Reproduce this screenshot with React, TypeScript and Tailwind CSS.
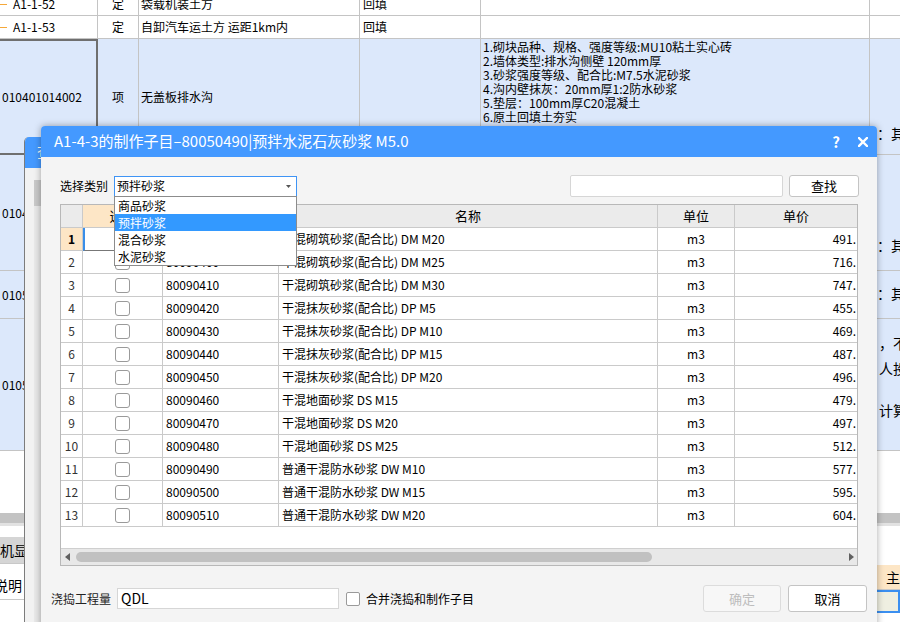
import React from "react";

const COLS = "grid grid-cols-[98px_41px_221px_121px_389px_30px]";
const bcell = "border-r border-b border-[#c4c4c4]";

function Background() {
  return (
    <div className="flex flex-col text-[12px] text-black">
      {/* row A */}
      <div className={`${COLS} h-[23px] -mt-[7px]`}>
        <div className={`${bcell} flex items-center`}>
          <span className="w-[7px] h-px bg-[#f5a83a]" />
          <span className="ml-[6px]">A1-1-52</span>
        </div>
        <div className={`${bcell} flex items-center justify-center`}>定</div>
        <div className={`${bcell} flex items-center pl-[2px]`}>袋载机装土方</div>
        <div className={`${bcell} flex items-center pl-[3px]`}>回填</div>
        <div className={bcell}></div>
        <div className="border-b border-[#c4c4c4]"></div>
      </div>
      {/* row B */}
      <div className={`${COLS} h-[23px]`}>
        <div className={`${bcell} flex items-center`}>
          <span className="w-[7px] h-px bg-[#f5a83a]" />
          <span className="ml-[6px]">A1-1-53</span>
        </div>
        <div className={`${bcell} flex items-center justify-center`}>定</div>
        <div className={`${bcell} flex items-center pl-[2px]`}>自卸汽车运土方 运距1km内</div>
        <div className={`${bcell} flex items-center pl-[3px]`}>回填</div>
        <div className={bcell}></div>
        <div className="border-b border-[#c4c4c4]"></div>
      </div>
      {/* row C */}
      <div className={`${COLS} h-[116px] bg-[#dce8fb]`}>
        <div className="border-t-2 border-r-2 border-b-2 border-[#6f6f6f] flex items-center pl-[2px]">010401014002</div>
        <div className={`${bcell} flex items-center justify-center`}>项</div>
        <div className={`${bcell} flex items-center pl-[2px]`}>无盖板排水沟</div>
        <div className={bcell}></div>
        <div className={`${bcell} pl-[2px] pt-[1px] leading-[14px]`}>
          <div>1.砌块品种、规格、强度等级:MU10粘土实心砖</div>
          <div>2.墙体类型:排水沟侧壁 120mm厚</div>
          <div>3.砂浆强度等级、配合比:M7.5水泥砂浆</div>
          <div>4.沟内壁抹灰：20mm厚1:2防水砂浆</div>
          <div>5.垫层：100mm厚C20混凝土</div>
          <div>6.原土回填土夯实</div>
        </div>
        <div className="border-b border-[#c4c4c4] pl-[7px] pt-[86px] text-[14px] leading-[16px] whitespace-nowrap">：其他</div>
      </div>
      {/* row D */}
      <div className={`${COLS} h-[116px] bg-[#dce8fb]`}>
        <div className={`${bcell} flex items-center pl-[2px]`}>010401014003</div>
        <div className={bcell}></div>
        <div className={bcell}></div>
        <div className={bcell}></div>
        <div className={bcell}></div>
        <div className="border-b border-[#c4c4c4] pl-[7px] pt-[82px] text-[14px] leading-[16px] whitespace-nowrap">：其他</div>
      </div>
      {/* row E */}
      <div className={`${COLS} h-[48px] bg-[#dce8fb]`}>
        <div className={`${bcell} flex items-center pl-[2px]`}>010501001001</div>
        <div className={bcell}></div>
        <div className={bcell}></div>
        <div className={bcell}></div>
        <div className={bcell}></div>
        <div className="border-b border-[#c4c4c4] pl-[7px] pt-[14px] text-[14px] leading-[16px] whitespace-nowrap">：其他</div>
      </div>
      {/* row F */}
      <div className={`${COLS} h-[132px] bg-[#dce8fb]`}>
        <div className={`${bcell} flex items-center pl-[2px]`}>010501002001</div>
        <div className={bcell}></div>
        <div className={bcell}></div>
        <div className={bcell}></div>
        <div className={bcell}></div>
        <div className="border-b border-[#c4c4c4] pl-[9px] pt-[16px] text-[14px] leading-[16px] whitespace-nowrap">
          <div>，不</div>
          <div className="mt-[9px]">人投</div>
          <div className="mt-[26px]">计算</div>
        </div>
      </div>
      {/* white gap */}
      <div className="h-[62px]" />
      {/* bottom panel */}
      <div className="h-[10px] bg-[#c3c3c3]" />
      <div className="h-[3px] bg-[#e2e2e2]" />
      <div className="flex">
        <div className="w-[870px] flex flex-col">
          <div className="mt-[11px] h-[26px] w-[60px] bg-[#d5d5d5] flex items-center text-[14px] whitespace-nowrap">机显示</div>
          <div className="h-[37px] border-t border-b border-[#c8c8c8] flex items-center pt-[8px] text-[14px] whitespace-nowrap">
            <span className="-ml-[6px]">说明</span>
          </div>
        </div>
        <div className="flex-1 pl-[10px] flex flex-col">
          <div className="mt-[39px] h-[25px] bg-[#fde6c6] border-l border-b border-[#c8c8c8] text-[14px] pl-[16px] flex items-center overflow-hidden whitespace-nowrap">主</div>
          <div className="h-[23px] bg-[#efefe1] border-2 border-[#3b8ff0]" />
        </div>
      </div>
    </div>
  );
}

function BackDialog() {
  return (
    <div className="absolute left-[24px] top-[137px] w-[420px] h-[500px] rounded-t-[5px] overflow-hidden bg-[#f2f2f2] border-l border-[#7c7c7c] flex flex-col">
      <div className="h-[31px] bg-[#4499ff] text-white text-[15px] pl-[12px] flex items-center shrink-0">查询</div>
      <div className="flex-1 pl-[9px] pt-[12px] flex">
        <div className="w-[8px] bg-[#e9e9e9] flex flex-col">
          <div className="h-[26px] bg-[#c9c9c9]" />
        </div>
      </div>
    </div>
  );
}

const GCOLS = "grid grid-cols-[22px_80px_116px_379px_77px_1fr]";
const gcell = "border-r border-b border-[#cacaca]";

const data: [string, string, string][] = [
  ["80090390", "干混砌筑砂浆(配合比) DM M20", "491."],
  ["80090400", "干混砌筑砂浆(配合比) DM M25", "716."],
  ["80090410", "干混砌筑砂浆(配合比) DM M30", "747."],
  ["80090420", "干混抹灰砂浆(配合比) DP M5", "455."],
  ["80090430", "干混抹灰砂浆(配合比) DP M10", "469."],
  ["80090440", "干混抹灰砂浆(配合比) DP M15", "487."],
  ["80090450", "干混抹灰砂浆(配合比) DP M20", "496."],
  ["80090460", "干混地面砂浆 DS M15", "479."],
  ["80090470", "干混地面砂浆 DS M20", "497."],
  ["80090480", "干混地面砂浆 DS M25", "512."],
  ["80090490", "普通干混防水砂浆 DW M10", "577."],
  ["80090500", "普通干混防水砂浆 DW M15", "595."],
  ["80090510", "普通干混防水砂浆 DW M20", "604."],
];

function Grid() {
  return (
    <div className="mx-[19px] mt-[7px] h-[362px] border border-[#b8b8b8] bg-white flex flex-col overflow-hidden text-[12px]">
      <div className={`${GCOLS} h-[23px] bg-[#ebebeb]`}>
        <div className={gcell}></div>
        <div className={`${gcell} bg-[#fde6c6] flex items-center justify-center text-[13px]`}>选择</div>
        <div className={`${gcell} flex items-center justify-center text-[13px]`}>编码</div>
        <div className={`${gcell} flex items-center justify-center text-[13px]`}>名称</div>
        <div className={`${gcell} flex items-center justify-center text-[13px]`}>单位</div>
        <div className="border-b border-[#cacaca] flex items-center justify-center text-[13px]">单价</div>
      </div>
      {data.map((r, i) => (
        <div key={i} className={`${GCOLS} h-[23px]`}>
          <div
            className={
              i === 0
                ? `${gcell} bg-[#fde6c6] flex items-center justify-center font-bold`
                : `${gcell} flex items-center justify-center text-[#333]`
            }
          >
            {i + 1}
          </div>
          <div
            className={
              i === 0
                ? "border-l-2 border-l-[#3a8ee8] border-r border-r-[#cacaca] border-b border-b-[#777] flex items-center justify-center"
                : `${gcell} flex items-center justify-center`
            }
          >
            <span className="w-[15px] h-[15px] border border-[#9a9a9a] rounded-[3px] bg-white" />
          </div>
          <div className={`${gcell} flex items-center pl-[3px]`}>{r[0]}</div>
          <div className={`${gcell} flex items-center pl-[3px] whitespace-nowrap overflow-hidden`}>{r[1]}</div>
          <div className={`${gcell} flex items-center justify-center`}>m3</div>
          <div className="border-b border-[#cacaca] flex items-center justify-end pr-[1px]">{r[2]}</div>
        </div>
      ))}
      <div className="flex-1" />
      <div className="h-[17px] bg-[#e8e8e8] border-t border-[#cfcfcf] flex items-center">
        <svg width="5" height="8" viewBox="0 0 5 8" className="ml-[4px]">
          <path d="M5 0 L0 4 L5 8 Z" fill="#606060" />
        </svg>
        <div className="ml-[6px] w-[576px] h-[10px] rounded-full bg-[#c1c1c1]" />
        <svg width="5" height="8" viewBox="0 0 5 8" className="ml-auto mr-[3px]">
          <path d="M0 0 L5 4 L0 8 Z" fill="#606060" />
        </svg>
      </div>
    </div>
  );
}

function MainDialog() {
  return (
    <div className="absolute left-[41px] top-[126px] w-[836px] h-[510px] bg-[#f4f4f4] rounded-t-[4px] shadow-[0_0_7px_rgba(0,0,0,0.35)] flex flex-col">
      <div className="h-[31px] shrink-0 bg-[#4499ff] rounded-t-[4px] flex items-center pl-[13px] pr-[9px] text-white">
        <span className="text-[15px] whitespace-nowrap">A1-4-3的制作子目–80050490|预拌水泥石灰砂浆 M5.0</span>
        <div className="ml-auto flex items-center">
          <span className="text-[15px] font-bold leading-none">?</span>
          <svg width="10" height="10" viewBox="0 0 10 10" className="ml-[18px]">
            <path d="M1 1 L9 9 M9 1 L1 9" stroke="#fff" strokeWidth="2.4" strokeLinecap="square" />
          </svg>
        </div>
      </div>
      {/* top controls */}
      <div className="mt-[18px] h-[22px] pl-[19px] pr-[18px] flex items-center text-[12px]">
        <span className="w-[48px] whitespace-nowrap">选择类别</span>
        <div className="ml-[6px] w-[183px] h-[21px] bg-white border border-[#3f94f5] flex items-center pl-[2px]">
          <span>预拌砂浆</span>
          <svg width="5" height="3" viewBox="0 0 5 3" className="ml-auto mr-[5px]">
            <path d="M0 0 L5 0 L2.5 3 Z" fill="#555" />
          </svg>
        </div>
        <div className="ml-auto w-[213px] h-[22px] bg-white border border-[#d6d6d6] rounded-[2px]" />
        <button className="ml-[6px] w-[70px] h-[22px] bg-white border border-[#c4c4c4] rounded-[3px] text-[13px] flex items-center justify-center">
          查找
        </button>
      </div>
      <Grid />
      {/* bottom */}
      <div className="mt-[19px] h-[27px] pl-[10px] pr-[10px] flex items-center text-[12px]">
        <span className="w-[60px] whitespace-nowrap text-[#222]">浇捣工程量</span>
        <div className="ml-[6px] w-[222px] h-[21px] bg-white border border-[#d6d6d6] flex items-center pl-[3px] text-[14px]">QDL</div>
        <span className="ml-[7px] w-[14px] h-[14px] border border-[#9a9a9a] rounded-[2px] bg-white" />
        <span className="ml-[6px] whitespace-nowrap">合并浇捣和制作子目</span>
        <button className="ml-auto w-[78px] h-[27px] bg-[#f7f7f7] border border-[#dcdcdc] rounded-[3px] text-[13px] text-[#bdbdbd] flex items-center justify-center">
          确定
        </button>
        <button className="ml-[7px] w-[79px] h-[27px] bg-white border border-[#c4c4c4] rounded-[3px] text-[13px] flex items-center justify-center">
          取消
        </button>
      </div>
      {/* dropdown list overlay */}
      <div className="absolute left-[73px] top-[70px] w-[183px] bg-white border border-[#8c8c8c] flex flex-col text-[12px]">
        <div className="h-[17px] flex items-center pl-[3px]">商品砂浆</div>
        <div className="h-[17px] flex items-center pl-[3px] bg-[#3399ff] text-white">预拌砂浆</div>
        <div className="h-[17px] flex items-center pl-[3px]">混合砂浆</div>
        <div className="h-[17px] flex items-center pl-[3px]">水泥砂浆</div>
      </div>
    </div>
  );
}

export default function App() {
  return (
    <div className="relative w-[900px] h-[622px] overflow-hidden bg-white font-['Noto_Sans_CJK_SC',sans-serif] text-black">
      <Background />
      <BackDialog />
      <MainDialog />
    </div>
  );
}
